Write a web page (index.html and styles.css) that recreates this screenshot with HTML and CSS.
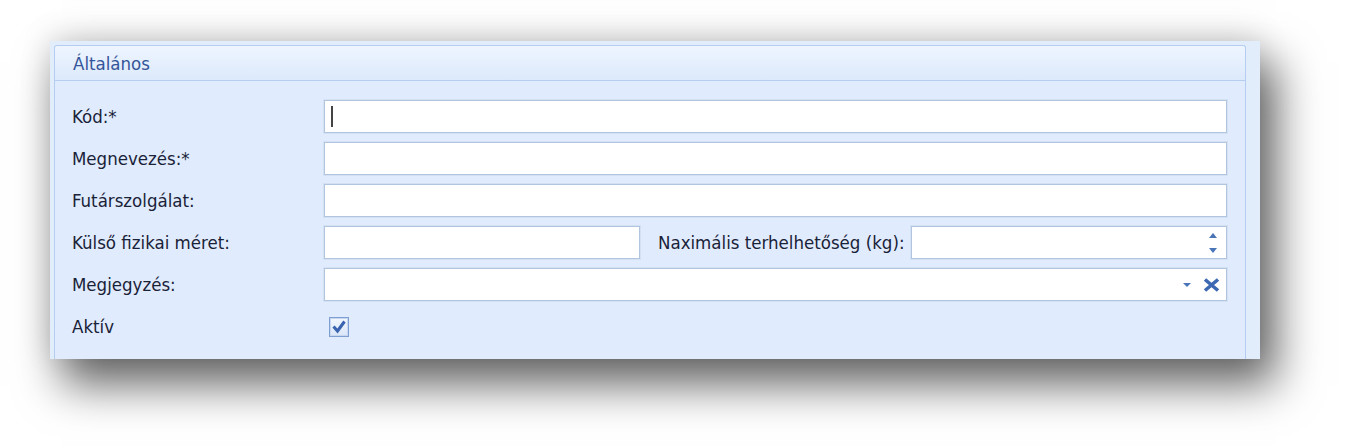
FILE: index.html
```html
<!DOCTYPE html>
<html lang="hu">
<head>
<meta charset="utf-8">
<title>Általános</title>
<link rel="stylesheet" href="styles.css">
</head>
<body>
<div class="page">
  <div class="panel">
    <div class="group">
      <div class="group-header">Általános</div>
      <div class="form">
        <div class="label">Kód:*</div>
        <div class="field"><div class="input"><span class="caret"></span></div></div>

        <div class="label">Megnevezés:*</div>
        <div class="field"><div class="input"></div></div>

        <div class="label">Futárszolgálat:</div>
        <div class="field"><div class="input"></div></div>

        <div class="label">Külső fizikai méret:</div>
        <div class="field split">
          <div class="input half"></div>
          <div class="label inline">Naximális terhelhetőség (kg):</div>
          <div class="input half spin">
            <span class="spin-btns">
              <svg width="10" height="22" viewBox="0 0 10 22"><path d="M5 1 L9 6 L1 6 Z" fill="#4a74b8"/><path d="M1 16 L9 16 L5 21 Z" fill="#4a74b8"/></svg>
            </span>
          </div>
        </div>

        <div class="label">Megjegyzés:</div>
        <div class="field">
          <div class="input combo">
            <svg class="drop" width="10" height="6" viewBox="0 0 10 6"><path d="M1 1 L9 1 L5 5 Z" fill="#4a74b8"/></svg>
            <svg class="clear" width="19" height="14" viewBox="0 0 19 14"><path d="M3 1.5 L16 12.5 M16 1.5 L3 12.5" stroke="#3c69b2" stroke-width="3.6" stroke-linecap="butt"/></svg>
          </div>
        </div>

        <div class="label">Aktív</div>
        <div class="field">
          <span class="checkbox">
            <svg width="16" height="16" viewBox="0 0 16 16"><path d="M2.5 7.5 L6.5 12 L13.5 2.5" fill="none" stroke="#3a64b0" stroke-width="3"/></svg>
          </span>
        </div>
      </div>
    </div>
  </div>
</div>
</body>
</html>
```

FILE: styles.css
```css
html, body {
  margin: 0;
  padding: 0;
  background: #ffffff;
  overflow: hidden;
}
.page {
  width: 1346px;
  height: 446px;
  padding: 41px 0 0 50px;
  box-sizing: border-box;
}
.panel {
  width: 1210px;
  height: 318px;
  box-sizing: border-box;
  padding: 4px 14px 0 4px;
  background: #e2edfc;
  box-shadow: 14px 24px 42px 2px rgba(0, 0, 0, 0.6), 0 -6px 30px rgba(0, 0, 0, 0.12);
  font-family: "DejaVu Sans Condensed", "Liberation Sans", sans-serif;
  font-size: 18.5px;
}
.group {
  height: 100%;
  box-sizing: border-box;
  border: 1px solid #b4cdf0;
  border-bottom: none;
  border-radius: 3px 3px 0 0;
  background: #e0ecfd;
}
.group-header {
  height: 34px;
  border-bottom: 1px solid #b4cdf0;
  background: linear-gradient(#eef5ff, #dce9fb);
  color: #34559a;
  display: flex;
  align-items: center;
  padding-left: 18px;
  border-radius: 3px 3px 0 0;
}
.form {
  display: grid;
  grid-template-columns: 252px 1fr;
  grid-auto-rows: 33px;
  row-gap: 9px;
  padding: 19px 18px 0 17px;
}
.label {
  display: flex;
  align-items: center;
  color: #1a2238;
  white-space: nowrap;
}
.field {
  display: flex;
  align-items: center;
}
.input {
  flex: 1;
  height: 33px;
  box-sizing: border-box;
  background: #ffffff;
  border: 1px solid #b1c4e0;
  box-shadow: 0 0 0 1px #d4e1f3;
  display: flex;
  align-items: center;
  position: relative;
}
.split .half {
  flex: 0 0 316px;
}
.label.inline {
  height: 33px;
  flex: 1;
  padding-left: 18px;
}
.caret {
  width: 2px;
  height: 21px;
  background: #444;
  margin-left: 6px;
}
.spin {
  justify-content: flex-end;
}
.spin-btns {
  display: flex;
  margin-right: 8px;
}
.combo {
  justify-content: flex-end;
  gap: 10px;
  padding-right: 5px;
}
.checkbox {
  width: 20px;
  height: 20px;
  box-sizing: border-box;
  margin-left: 5px;
  border: 1px solid #7f9fd3;
  background: linear-gradient(#f2f7fe, #dae6f8);
  box-shadow: inset 0 0 0 1px #c7d7f0;
  display: flex;
  align-items: center;
  justify-content: center;
}
```
